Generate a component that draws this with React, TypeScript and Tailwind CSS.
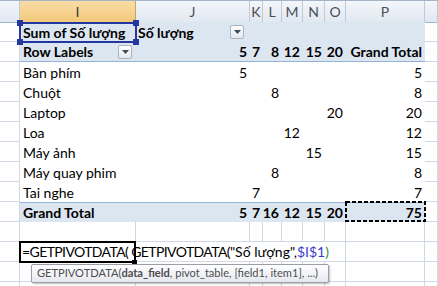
import React from 'react'

const FONT = "font-['Lato','Open_Sans',sans-serif]"

// column widths: H(part) I J K L M N O P Q(part)
const GRID = 'grid grid-cols-[20px_116px_114px_13px_19px_21px_22px_21px_79px_13px]'
const LETTERS = ['', 'I', 'J', 'K', 'L', 'M', 'N', 'O', 'P', '']

const BODY = [
  { label: 'Bàn phím', col: 2, v: 5 },
  { label: 'Chuột', col: 4, v: 8 },
  { label: 'Laptop', col: 7, v: 20 },
  { label: 'Loa', col: 5, v: 12 },
  { label: 'Máy ảnh', col: 6, v: 15 },
  { label: 'Máy quay phim', col: 4, v: 8 },
  { label: 'Tai nghe', col: 3, v: 7 },
]

const TOTALS = ['5', '7', '16', '12', '15', '20', '75']

function Grid() {
  return <div className="h-5 border-b border-r border-[#d0d7e5]" />
}

function DropBtn() {
  return (
    <div className="w-[14px] h-[14px] border border-[#a9b4c2] rounded-[2px] bg-gradient-to-b from-white to-[#e3e8ef] flex items-center justify-center">
      <svg width="7" height="4" viewBox="0 0 7 4">
        <path d="M0 0h7L3.5 4z" fill="#3b4a5c" />
      </svg>
    </div>
  )
}

function Num({ v, bold }: { v: string | number; bold?: boolean }) {
  return <div className={`h-5 flex items-center justify-end pr-[3px] ${bold ? 'font-bold' : ''}`}>{v}</div>
}

export default function App() {
  return (
    <div className={`relative w-[438px] h-[286px] overflow-hidden bg-white text-[14px] text-black ${FONT}`}>
      {/* column headers */}
      <div className={`${GRID} h-[22px] border-t border-[#a5b3c4]`}>
        {LETTERS.map((l, i) => (
          <div
            key={i}
            className={`flex items-center justify-center text-[14px] border-r border-b ${
              l === 'I'
                ? 'bg-gradient-to-b from-[#f9dca6] to-[#f3c978] border-r-[#c5a567] border-b-[#e0a43c] text-[#3a3a3a]'
                : 'bg-gradient-to-b from-[#f3f6fa] to-[#e2e8f1] border-r-[#c1cbd8] border-b-[#9eb6ce] text-[#4a4f57]'
            }`}
          >
            {l}
          </div>
        ))}
      </div>

      {/* row 1 */}
      <div className={GRID}>
        <Grid />
        <div className="h-5 bg-[#dce6f1] flex items-center pl-[3px] font-bold">Sum of Số lượng</div>
        <div className="h-5 bg-[#dce6f1] flex items-center pl-[2px] pr-[6px] font-bold justify-between">
          <span>Số lượng</span>
          <DropBtn />
        </div>
        {[3, 4, 5, 6, 7, 8].map((c) => (
          <div key={c} className="h-5 bg-[#dce6f1]" />
        ))}
        <Grid />
      </div>

      {/* row 2 */}
      <div className={GRID}>
        <Grid />
        <div className="h-5 bg-[#dce6f1] border-b border-[#95b3d7] flex items-center justify-between pl-[3px] pr-[4px] font-bold">
          <span>Row Labels</span>
          <DropBtn />
        </div>
        {['5', '7', '8', '12', '15', '20', 'Grand Total'].map((v, i) => (
          <div key={i} className="h-5 bg-[#dce6f1] border-b border-[#95b3d7] flex items-center justify-end pr-[3px] font-bold whitespace-nowrap">
            {v}
          </div>
        ))}
        <Grid />
      </div>

      {/* body */}
      {BODY.map((r) => (
        <div key={r.label} className={GRID}>
          <Grid />
          <div className="h-5 flex items-center pl-[3px]">{r.label}</div>
          {[2, 3, 4, 5, 6, 7].map((c) => (
            <Num key={c} v={c === r.col ? r.v : ''} />
          ))}
          <Num v={r.v} />
          <Grid />
        </div>
      ))}

      {/* grand total */}
      <div className={GRID}>
        <Grid />
        <div className="h-5 bg-[#dce6f1] border-t border-[#95b3d7] flex items-center pl-[3px] font-bold">Grand Total</div>
        {TOTALS.map((v, i) => (
          <div key={i} className="h-5 bg-[#dce6f1] border-t border-[#95b3d7] flex items-center justify-end pr-[3px] font-bold">
            {v}
          </div>
        ))}
        <Grid />
      </div>

      {/* empty row */}
      <div className={GRID}>
        {LETTERS.map((_, i) => (
          <Grid key={i} />
        ))}
      </div>

      {/* formula row */}
      <div className={GRID}>
        <Grid />
        <div className="h-5 border-b border-[#d0d7e5] flex items-center pl-[2px] whitespace-nowrap relative z-10">
          <span>
            <span className="tracking-[-0.6px]">=GETPIVOTDATA(</span>
            <span className="tracking-[-0.6px] ml-[3px]">GETPIVOTDATA(</span>"Số lượng",<span className="text-[#3a3acf]">$I$1</span>
            <span className="text-[#2f8f2f]">)</span>
          </span>
        </div>
        {[2, 3, 4, 5, 6].map((c) => (
          <div key={c} className="h-5 border-b border-[#d0d7e5]" />
        ))}
        <Grid />
        <Grid />
        <Grid />
      </div>

      {/* rows 13-14 */}
      {[13, 14].map((n) => (
        <div key={n} className={GRID}>
          {LETTERS.map((_, i) => (
            <Grid key={i} />
          ))}
        </div>
      ))}

      {/* referenced cell highlight I1 */}
      <div className="absolute left-[19px] top-[22px] w-[118px] h-[21px] border-2 border-[#2437a0]">
        <div className="absolute -left-[4px] -top-[4px] w-[6px] h-[6px] bg-[#2437a0]" />
        <div className="absolute -right-[4px] -top-[4px] w-[6px] h-[6px] bg-[#2437a0]" />
        <div className="absolute -left-[4px] -bottom-[4px] w-[6px] h-[6px] bg-[#2437a0]" />
        <div className="absolute -right-[4px] -bottom-[4px] w-[6px] h-[6px] bg-[#2437a0]" />
      </div>

      {/* copy marquee on P10 */}
      <svg className="absolute left-[345px] top-[201px]" width="81" height="21">
        <rect x="1" y="1" width="79" height="19" fill="none" stroke="#000" strokeWidth="2" strokeDasharray="4 2" />
      </svg>

      {/* active edit cell I12 */}
      <div className="absolute left-[19px] top-[241px] w-[117px] h-[22px] border-2 border-black z-20" />
      <div className="absolute left-[132px] top-[260px] w-[5px] h-[5px] bg-black z-20" />

      {/* function tooltip */}
      <div className="absolute left-[31px] top-[264px] w-[298px] h-[19px] z-30 rounded-[2px] border border-[#9a9ea6] bg-gradient-to-b from-white to-[#e6e8ef] shadow-[1px_1px_2px_rgba(0,0,0,0.25)] flex items-center pl-[5px] text-[11.1px] text-[#4d4d4d] whitespace-nowrap">
        GETPIVOTDATA(<span className="font-bold">data_field</span>, pivot_table, [field1, item1], ...)
      </div>
    </div>
  )
}
